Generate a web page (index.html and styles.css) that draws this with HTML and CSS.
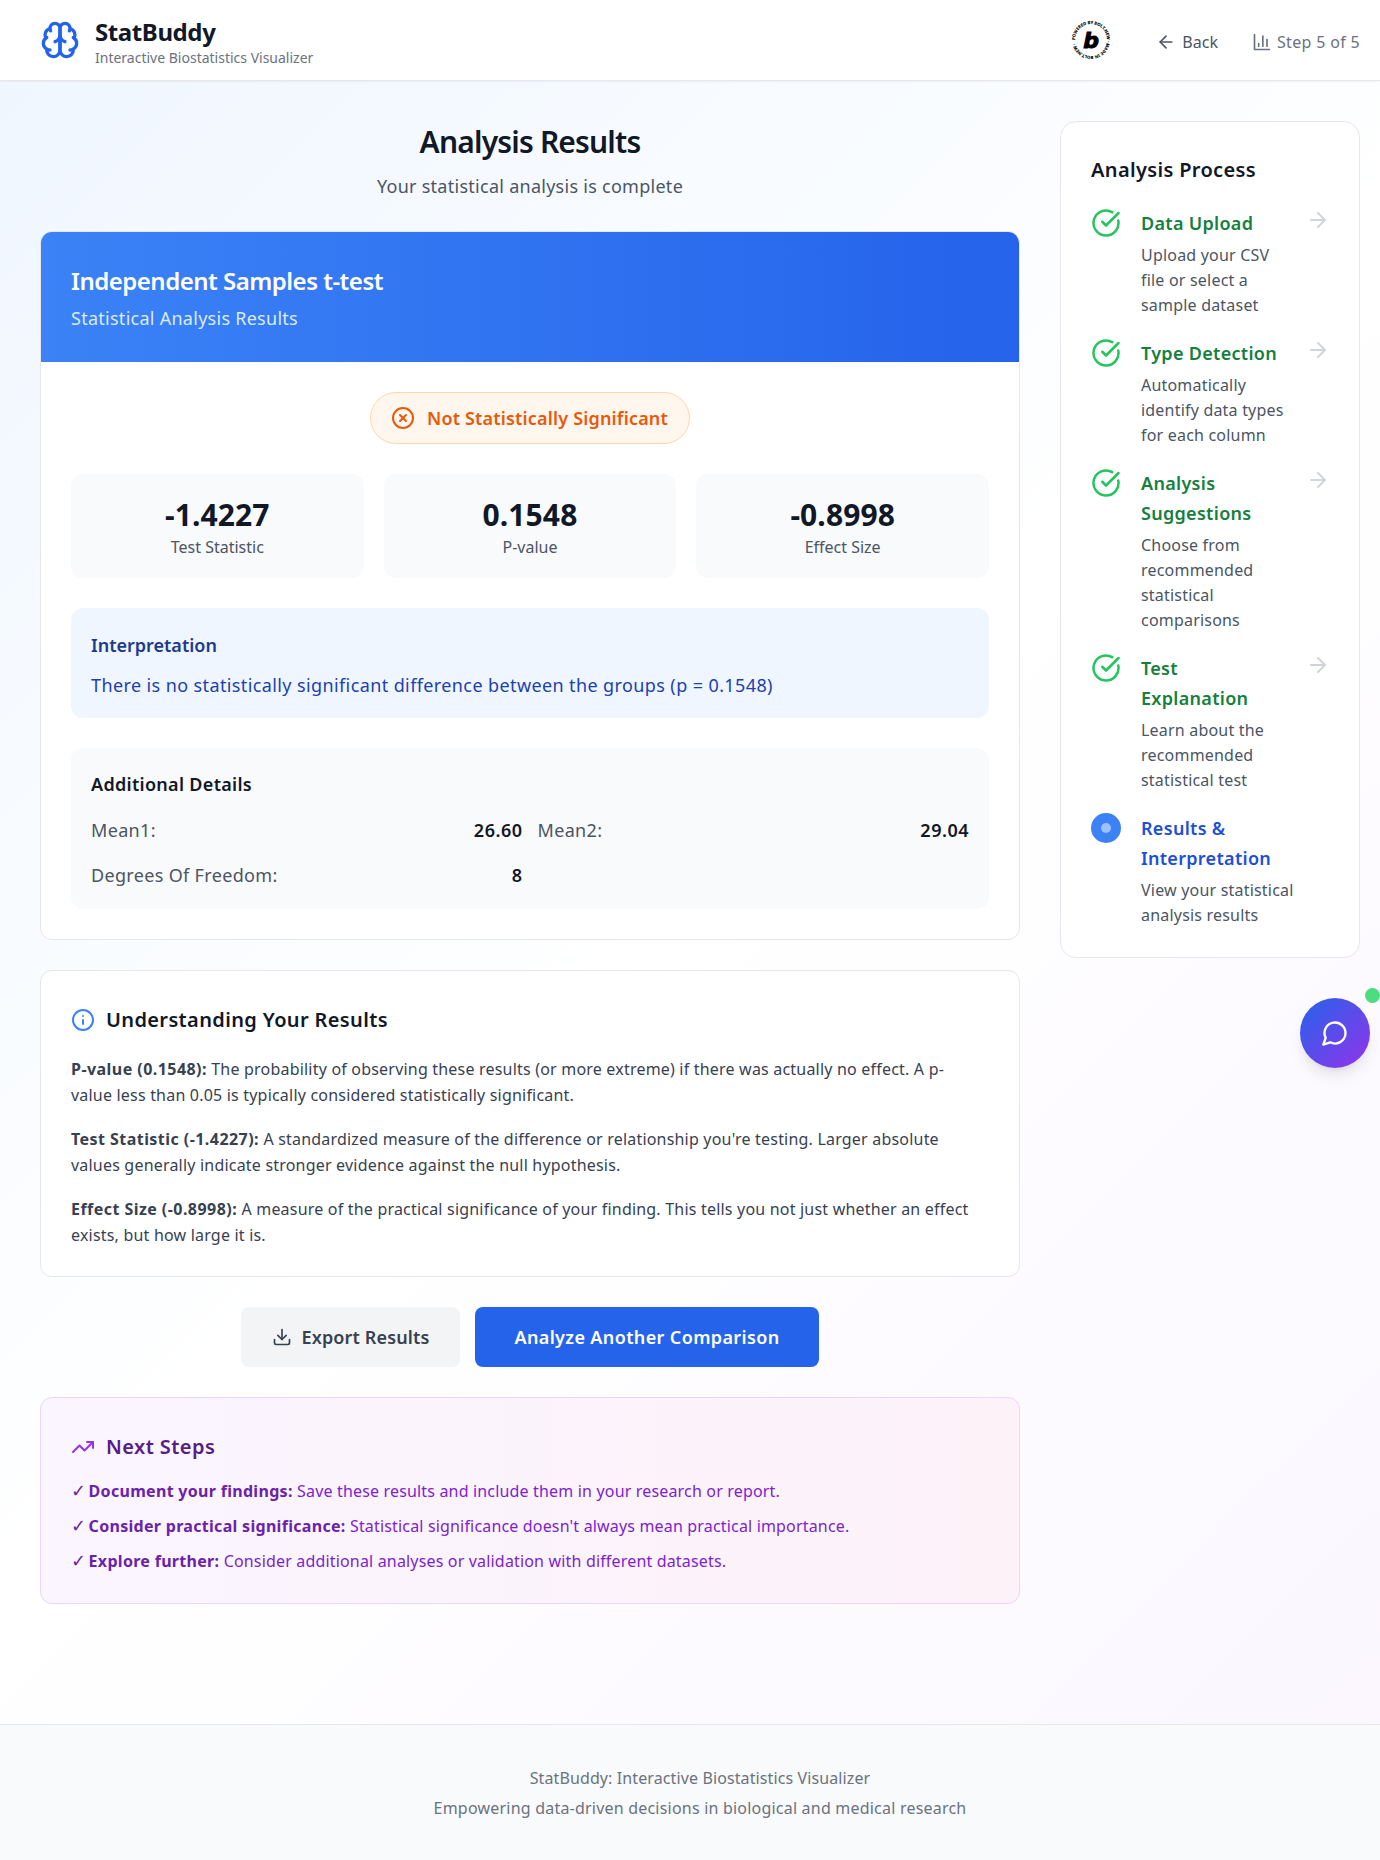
FILE: index.html
```html
<!DOCTYPE html>
<html lang="en">
<head>
<meta charset="utf-8">
<title>StatBuddy</title>
<link rel="stylesheet" href="styles.css">
</head>
<body>
<div class="page">
  <header class="topbar">
    <div class="brand">
      <svg class="brand-icon" viewBox="0 0 24 24" fill="none" stroke="#2563eb" stroke-width="2" stroke-linecap="round" stroke-linejoin="round"><path d="M12 5a3 3 0 1 0-5.997.125 4 4 0 0 0-2.526 5.77 4 4 0 0 0 .556 6.588A4 4 0 1 0 12 18Z"/><path d="M12 5a3 3 0 1 1 5.997.125 4 4 0 0 1 2.526 5.77 4 4 0 0 1-.556 6.588A4 4 0 1 1 12 18Z"/><path d="M15 13a4.5 4.5 0 0 1-3-4 4.5 4.5 0 0 1-3 4"/><path d="M17.599 6.5a3 3 0 0 0 .399-1.375"/><path d="M6.003 5.125A3 3 0 0 0 6.401 6.5"/><path d="M3.477 10.896a4 4 0 0 1 .585-.396"/><path d="M19.938 10.5a4 4 0 0 1 .585.396"/><path d="M6 18a4 4 0 0 1-1.967-.516"/><path d="M19.967 17.484A4 4 0 0 1 18 18"/></svg>
      <div class="brand-text">
        <div class="brand-name">StatBuddy</div>
        <div class="brand-sub">Interactive Biostatistics Visualizer</div>
      </div>
    </div>
    <div class="top-actions">
      <svg class="bolt" viewBox="0 0 40 40"><defs><path id="ring" d="M20 20m-16 0a16 16 0 1 1 32 0a16 16 0 1 1-32 0"/></defs><text class="bolt-ring"><textPath href="#ring">POWERED BY BOLT.NEW · MADE IN BOLT.NEW · </textPath></text><text class="bolt-b" x="20" y="28" text-anchor="middle">b</text></svg>
      <span class="top-link back"><svg class="ico20" viewBox="0 0 24 24" fill="none" stroke="currentColor" stroke-width="2" stroke-linecap="round" stroke-linejoin="round"><path d="m12 19-7-7 7-7"/><path d="M19 12H5"/></svg>Back</span>
      <span class="top-link step"><svg class="ico20" viewBox="0 0 24 24" fill="none" stroke="currentColor" stroke-width="2" stroke-linecap="round" stroke-linejoin="round"><path d="M3 3v18h18"/><path d="M18 17V9"/><path d="M13 17V5"/><path d="M8 17v-3"/></svg>Step 5 of 5</span>
    </div>
  </header>

  <div class="layout">
    <main class="content">
      <div class="title-block">
        <h1>Analysis Results</h1>
        <p>Your statistical analysis is complete</p>
      </div>

      <section class="result-card">
        <div class="result-head">
          <h2>Independent Samples t-test</h2>
          <p>Statistical Analysis Results</p>
        </div>
        <div class="result-body">
          <div class="badge-row">
            <div class="badge"><svg class="ico24" viewBox="0 0 24 24" fill="none" stroke="currentColor" stroke-width="2" stroke-linecap="round" stroke-linejoin="round"><circle cx="12" cy="12" r="10"/><path d="m15 9-6 6"/><path d="m9 9 6 6"/></svg>Not Statistically Significant</div>
          </div>
          <div class="stats">
            <div class="stat"><div class="stat-val">-1.4227</div><div class="stat-lab">Test Statistic</div></div>
            <div class="stat"><div class="stat-val">0.1548</div><div class="stat-lab">P-value</div></div>
            <div class="stat"><div class="stat-val">-0.8998</div><div class="stat-lab">Effect Size</div></div>
          </div>
          <div class="interp">
            <h3>Interpretation</h3>
            <p>There is no statistically significant difference between the groups (p = 0.1548)</p>
          </div>
          <div class="details">
            <h3>Additional Details</h3>
            <div class="detail-grid">
              <div class="detail"><span>Mean1:</span><b>26.60</b></div>
              <div class="detail"><span>Mean2:</span><b>29.04</b></div>
              <div class="detail"><span>Degrees Of Freedom:</span><b>8</b></div>
            </div>
          </div>
        </div>
      </section>

      <section class="card understand">
        <h3 class="sec-title"><svg class="ico24" viewBox="0 0 24 24" fill="none" stroke="#3b82f6" stroke-width="2" stroke-linecap="round" stroke-linejoin="round"><circle cx="12" cy="12" r="10"/><path d="M12 16v-4"/><path d="M12 8h.01"/></svg>Understanding Your Results</h3>
        <p><strong>P-value (0.1548):</strong> The probability of observing these results (or more extreme) if there was actually no effect. A p-value less than 0.05 is typically considered statistically significant.</p>
        <p><strong>Test Statistic (-1.4227):</strong> A standardized measure of the difference or relationship you're testing. Larger absolute values generally indicate stronger evidence against the null hypothesis.</p>
        <p><strong>Effect Size (-0.8998):</strong> A measure of the practical significance of your finding. This tells you not just whether an effect exists, but how large it is.</p>
      </section>

      <div class="actions">
        <button class="btn btn-ghost"><svg class="ico20" viewBox="0 0 24 24" fill="none" stroke="currentColor" stroke-width="2" stroke-linecap="round" stroke-linejoin="round"><path d="M21 15v4a2 2 0 0 1-2 2H5a2 2 0 0 1-2-2v-4"/><path d="m7 10 5 5 5-5"/><path d="M12 15V3"/></svg>Export Results</button>
        <button class="btn btn-primary">Analyze Another Comparison</button>
      </div>

      <section class="next">
        <h3 class="sec-title"><svg class="ico24" viewBox="0 0 24 24" fill="none" stroke="#9333ea" stroke-width="2" stroke-linecap="round" stroke-linejoin="round"><path d="M22 7 13.5 15.5 8.5 10.5 2 17"/><path d="M16 7h6v6"/></svg>Next Steps</h3>
        <p><span class="chk">✓</span> <strong>Document your findings:</strong> Save these results and include them in your research or report.</p>
        <p><span class="chk">✓</span> <strong>Consider practical significance:</strong> Statistical significance doesn't always mean practical importance.</p>
        <p><span class="chk">✓</span> <strong>Explore further:</strong> Consider additional analyses or validation with different datasets.</p>
      </section>
    </main>

    <aside class="side">
      <h3>Analysis Process</h3>
      <div class="step-item done">
        <svg class="step-ico" viewBox="0 0 24 24" fill="none" stroke="#22c55e" stroke-width="2" stroke-linecap="round" stroke-linejoin="round"><path d="M21.801 10A10 10 0 1 1 17 3.335"/><path d="m9 11 3 3L22 4"/></svg>
        <div class="step-text"><h4>Data Upload</h4><p>Upload your CSV file or select a sample dataset</p></div>
        <svg class="step-arrow" viewBox="0 0 24 24" fill="none" stroke="currentColor" stroke-width="2" stroke-linecap="round" stroke-linejoin="round"><path d="M5 12h14"/><path d="m12 5 7 7-7 7"/></svg>
      </div>
      <div class="step-item done">
        <svg class="step-ico" viewBox="0 0 24 24" fill="none" stroke="#22c55e" stroke-width="2" stroke-linecap="round" stroke-linejoin="round"><path d="M21.801 10A10 10 0 1 1 17 3.335"/><path d="m9 11 3 3L22 4"/></svg>
        <div class="step-text"><h4>Type Detection</h4><p>Automatically identify data types for each column</p></div>
        <svg class="step-arrow" viewBox="0 0 24 24" fill="none" stroke="currentColor" stroke-width="2" stroke-linecap="round" stroke-linejoin="round"><path d="M5 12h14"/><path d="m12 5 7 7-7 7"/></svg>
      </div>
      <div class="step-item done">
        <svg class="step-ico" viewBox="0 0 24 24" fill="none" stroke="#22c55e" stroke-width="2" stroke-linecap="round" stroke-linejoin="round"><path d="M21.801 10A10 10 0 1 1 17 3.335"/><path d="m9 11 3 3L22 4"/></svg>
        <div class="step-text"><h4>Analysis Suggestions</h4><p>Choose from recommended statistical comparisons</p></div>
        <svg class="step-arrow" viewBox="0 0 24 24" fill="none" stroke="currentColor" stroke-width="2" stroke-linecap="round" stroke-linejoin="round"><path d="M5 12h14"/><path d="m12 5 7 7-7 7"/></svg>
      </div>
      <div class="step-item done">
        <svg class="step-ico" viewBox="0 0 24 24" fill="none" stroke="#22c55e" stroke-width="2" stroke-linecap="round" stroke-linejoin="round"><path d="M21.801 10A10 10 0 1 1 17 3.335"/><path d="m9 11 3 3L22 4"/></svg>
        <div class="step-text"><h4>Test Explanation</h4><p>Learn about the recommended statistical test</p></div>
        <svg class="step-arrow" viewBox="0 0 24 24" fill="none" stroke="currentColor" stroke-width="2" stroke-linecap="round" stroke-linejoin="round"><path d="M5 12h14"/><path d="m12 5 7 7-7 7"/></svg>
      </div>
      <div class="step-item current">
        <div class="step-dot"><span></span></div>
        <div class="step-text"><h4>Results &amp; Interpretation</h4><p>View your statistical analysis results</p></div>
      </div>
    </aside>
  </div>

  <footer class="foot">
    <p class="foot-a">StatBuddy: Interactive Biostatistics Visualizer</p>
    <p class="foot-b">Empowering data-driven decisions in biological and medical research</p>
  </footer>
</div>

<div class="chat">
  <svg class="chat-ico" viewBox="0 0 24 24" fill="none" stroke="#fff" stroke-width="2" stroke-linecap="round" stroke-linejoin="round"><path d="M7.9 20A9 9 0 1 0 4 16.1L2 22Z"/></svg>
  <span class="chat-dot"></span>
</div>
</body>
</html>
```
FILE: styles.css
```css
* { box-sizing: border-box; }
html, body { margin: 0; padding: 0; }
body {
  font-family: "Noto Sans", "Open Sans", sans-serif;
  color: #111827;
}
h1, h2, h3, h4, p { margin: 0; }
.page {
  min-height: 1860px;
  display: flex;
  flex-direction: column;
  background: linear-gradient(135deg, #eff6ff 0%, #ffffff 50%, #faf5ff 100%);
}
.ico20 { width: 20px; height: 20px; flex: none; }
.ico24 { width: 24px; height: 24px; flex: none; }

.topbar {
  height: 81px;
  flex: none;
  background: #fff;
  border-bottom: 1px solid #e5e7eb;
  box-shadow: 0 1px 2px rgba(0,0,0,.05);
  padding: 0 20px 0 40px;
  display: flex;
  align-items: center;
  justify-content: space-between;
}
.brand { display: flex; align-items: center; gap: 15px; }
.brand-icon { width: 40px; height: 40px; }
.brand-text { padding-top: 4px; }
.brand-name { font-size: 24px; font-weight: 700; line-height: 32px; letter-spacing: -.4px; }
.brand-sub { font-size: 14px; line-height: 20px; color: #6b7280; }
.top-actions { display: flex; align-items: center; }
.bolt { width: 40px; height: 40px; margin-right: 45px; }
.bolt-ring { font-size: 4.2px; font-weight: 700; fill: #000; stroke: #000; stroke-width: .12px; }
.bolt-b { font-family: "DejaVu Sans", sans-serif; font-size: 22px; font-weight: 700; font-style: italic; fill: #000; stroke: #000; stroke-width: 1px; }
.top-link { display: inline-flex; align-items: center; font-size: 16px; line-height: 24px; padding-top: 3px; }
.back { color: #4b5563; margin-right: 34px; gap: 6px; }
.step { color: #6b7280; letter-spacing: .33px; gap: 5px; }

.layout {
  flex: 1;
  display: grid;
  grid-template-columns: 980px 300px;
  gap: 40px;
  padding: 40px 20px 100px 40px;
  align-items: start;
}
.content { display: flex; flex-direction: column; }
.title-block { text-align: center; margin-bottom: 31px; padding-top: 1px; }
.title-block h1 { font-size: 30px; line-height: 40px; font-weight: 600; letter-spacing: -.82px; margin-bottom: 10px; }
.title-block p { font-size: 18px; line-height: 28px; color: #4b5563; letter-spacing: .27px; }

.result-card {
  background: #fff;
  border: 1px solid #e5e7eb;
  border-radius: 12px;
  overflow: hidden;
  margin-bottom: 30px;
}
.result-head {
  background: linear-gradient(90deg, #3b82f6, #2563eb);
  color: #fff;
  padding: 33px 30px 0;
  height: 130px;
}
.result-head h2 { font-size: 24px; line-height: 32px; font-weight: 600; letter-spacing: -.5px; margin-bottom: 7px; }
.result-head p { font-size: 18px; line-height: 28px; color: #dbeafe; letter-spacing: .27px; }
.result-body { padding: 30px; }
.badge-row { display: flex; justify-content: center; margin-bottom: 30px; }
.badge {
  height: 52px;
  width: 320px;
  display: inline-flex;
  align-items: center;
  gap: 12px;
  padding: 0 20px;
  border: 1px solid #fed7aa;
  border-radius: 999px;
  background: #fff7ed;
  color: #ea580c;
  font-size: 18px;
  font-weight: 600;
  letter-spacing: .17px;
  white-space: nowrap;
}
.stats { display: grid; grid-template-columns: repeat(3, 1fr); gap: 20px; margin-bottom: 30px; }
.stat { height: 104px; background: #f9fafb; border-radius: 12px; padding: 23px 20px 0; text-align: center; }
.stat-val { font-size: 30px; line-height: 36px; font-weight: 700; letter-spacing: .1px; margin-bottom: 2px; }
.stat-lab { font-size: 16px; line-height: 24px; color: #4b5563; }
.interp { height: 110px; background: #eff6ff; border-radius: 12px; padding: 23px 20px 0; margin-bottom: 30px; }
.interp h3 { font-size: 18px; line-height: 28px; font-weight: 600; color: #1e3a8a; margin-bottom: 12px; }
.interp p { font-size: 18px; line-height: 28px; color: #1e40af; letter-spacing: .39px; }
.details { height: 161px; background: #f9fafb; border-radius: 12px; padding: 22px 20px 0; }
.details h3 { font-size: 18px; line-height: 28px; font-weight: 600; letter-spacing: .3px; margin-bottom: 18px; }
.detail-grid { display: grid; grid-template-columns: 1fr 1fr; gap: 17px 15px; }
.detail { display: flex; justify-content: space-between; font-size: 18px; line-height: 28px; letter-spacing: .33px; }
.detail span { color: #4b5563; }
.detail b { font-weight: 600; letter-spacing: .5px; }

.card {
  background: #fff;
  border: 1px solid #e5e7eb;
  border-radius: 12px;
}
.understand { padding: 35px 39px 0 30px; height: 307px; margin-bottom: 30px; }
.sec-title { display: flex; align-items: center; gap: 11px; font-size: 20px; line-height: 28px; font-weight: 600; letter-spacing: .36px; margin-bottom: 22px; }
.understand p { font-size: 16px; line-height: 26px; color: #374151; letter-spacing: .2px; margin-bottom: 18px; }
.understand strong { font-weight: 700; letter-spacing: .45px; }
.actions { display: flex; justify-content: center; gap: 15px; margin-bottom: 30px; }
.btn {
  height: 60px;
  border: 0;
  border-radius: 8px;
  font: inherit;
  font-size: 18px;
  font-weight: 600;
  display: inline-flex;
  align-items: center;
  justify-content: center;
}
.btn-ghost { width: 219px; gap: 10px; background: #f3f4f6; color: #374151; letter-spacing: .14px; }
.btn-primary { width: 344px; background: #2563eb; color: #fff; letter-spacing: .37px; }

.next {
  background: linear-gradient(90deg, #faf5ff, #fdf2f8);
  border: 1px solid #e9d5ff;
  border-radius: 12px;
  padding: 35px 30px 0;
  height: 207px;
}
.next .sec-title { color: #581c87; letter-spacing: .43px; margin-bottom: 18px; }
.next p { font-size: 16px; line-height: 24px; color: #7e22ce; letter-spacing: .17px; margin-bottom: 11px; white-space: nowrap; }
.next strong { font-weight: 700; color: #6b21a8; letter-spacing: .3px; }
.chk { font-family: "DejaVu Sans", sans-serif; font-size: 18px; color: #6b21a8; margin-right: -2px; }

.side {
  background: #fff;
  border: 1px solid #e5e7eb;
  border-radius: 16px;
  padding: 34px 30px 29px;
}
.side h3 { font-size: 20px; line-height: 28px; font-weight: 600; letter-spacing: .34px; margin-bottom: 24px; }
.step-item { display: flex; margin-bottom: 20px; }
.step-item:last-child { margin-bottom: 0; }
.step-ico { width: 30px; height: 30px; flex: none; margin-right: 20px; }
.step-text { flex: 1; min-width: 0; }
.step-text h4 { font-size: 18px; line-height: 30px; font-weight: 600; letter-spacing: .3px; margin-bottom: 5px; }
.step-text p { font-size: 16px; line-height: 25px; color: #4b5563; letter-spacing: .2px; }
.done h4 { color: #15803d; }
.current h4 { color: #1d4ed8; }
.step-arrow { width: 24px; height: 24px; flex: none; color: #d1d5db; margin-left: 18px; margin-right: -1px; }
.step-dot {
  width: 30px; height: 30px; flex: none; margin-right: 20px;
  border-radius: 50%; background: #3b82f6;
  display: flex; align-items: center; justify-content: center;
}
.step-dot span { width: 10px; height: 10px; border-radius: 50%; background: rgba(255,255,255,.5); }

.foot {
  flex: none;
  height: 136px;
  background: #f9fafb;
  border-top: 1px solid #e5e7eb;
  padding: 38px 0 0 20px;
  text-align: center;
  font-size: 16px;
  line-height: 30px;
  color: #6b7280;
}
.foot-a { letter-spacing: .11px; }
.foot-b { letter-spacing: .21px; }

.chat {
  position: fixed;
  left: 1300px;
  top: 998px;
  width: 70px;
  height: 70px;
  border-radius: 50%;
  background: linear-gradient(135deg, #2563eb, #9333ea);
  box-shadow: 0 10px 15px -3px rgba(0,0,0,.1), 0 4px 6px -4px rgba(0,0,0,.1);
  display: flex;
  align-items: center;
  justify-content: center;
}
.chat-ico { width: 28px; height: 28px; }
.chat-dot {
  position: absolute;
  left: 65px;
  top: -10px;
  width: 15px;
  height: 15px;
  border-radius: 50%;
  background: #4ade80;
}
```
